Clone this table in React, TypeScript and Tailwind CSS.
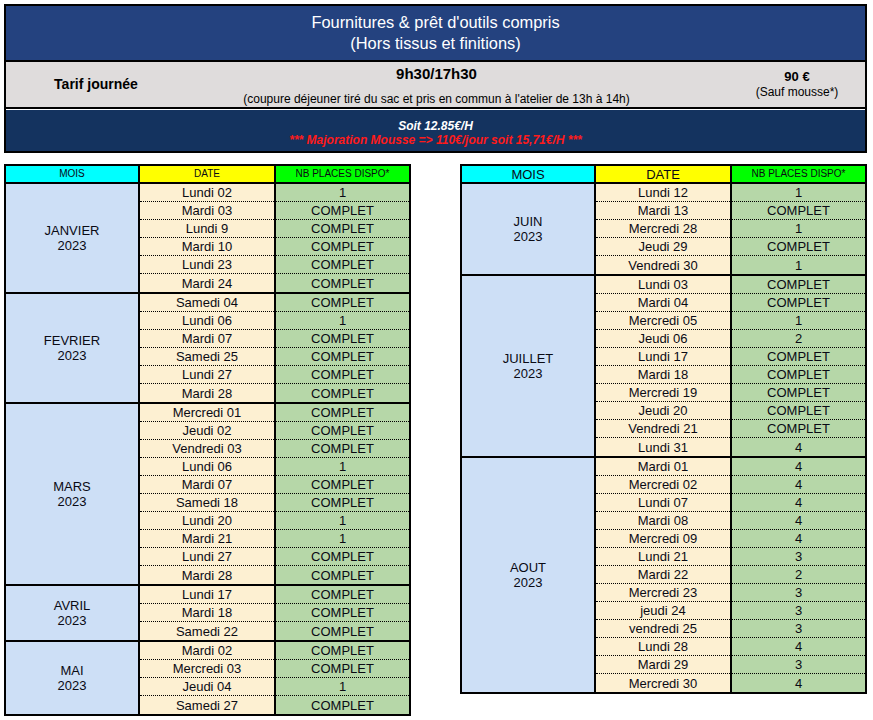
type Row = [string, string];
type Month = { name: string; rows: Row[] };

const leftMonths: Month[] = [
  {
    name: "JANVIER",
    rows: [
      ["Lundi 02", "1"],
      ["Mardi 03", "COMPLET"],
      ["Lundi 9", "COMPLET"],
      ["Mardi 10", "COMPLET"],
      ["Lundi 23", "COMPLET"],
      ["Mardi 24", "COMPLET"],
    ],
  },
  {
    name: "FEVRIER",
    rows: [
      ["Samedi 04", "COMPLET"],
      ["Lundi 06", "1"],
      ["Mardi 07", "COMPLET"],
      ["Samedi 25", "COMPLET"],
      ["Lundi 27", "COMPLET"],
      ["Mardi 28", "COMPLET"],
    ],
  },
  {
    name: "MARS",
    rows: [
      ["Mercredi 01", "COMPLET"],
      ["Jeudi 02", "COMPLET"],
      ["Vendredi 03", "COMPLET"],
      ["Lundi 06", "1"],
      ["Mardi 07", "COMPLET"],
      ["Samedi 18", "COMPLET"],
      ["Lundi 20", "1"],
      ["Mardi 21", "1"],
      ["Lundi 27", "COMPLET"],
      ["Mardi 28", "COMPLET"],
    ],
  },
  {
    name: "AVRIL",
    rows: [
      ["Lundi 17", "COMPLET"],
      ["Mardi 18", "COMPLET"],
      ["Samedi 22", "COMPLET"],
    ],
  },
  {
    name: "MAI",
    rows: [
      ["Mardi 02", "COMPLET"],
      ["Mercredi 03", "COMPLET"],
      ["Jeudi 04", "1"],
      ["Samedi 27", "COMPLET"],
    ],
  },
];

const rightMonths: Month[] = [
  {
    name: "JUIN",
    rows: [
      ["Lundi 12", "1"],
      ["Mardi 13", "COMPLET"],
      ["Mercredi 28", "1"],
      ["Jeudi 29", "COMPLET"],
      ["Vendredi 30", "1"],
    ],
  },
  {
    name: "JUILLET",
    rows: [
      ["Lundi 03", "COMPLET"],
      ["Mardi 04", "COMPLET"],
      ["Mercredi 05", "1"],
      ["Jeudi 06", "2"],
      ["Lundi 17", "COMPLET"],
      ["Mardi 18", "COMPLET"],
      ["Mercredi 19", "COMPLET"],
      ["Jeudi 20", "COMPLET"],
      ["Vendredi 21", "COMPLET"],
      ["Lundi 31", "4"],
    ],
  },
  {
    name: "AOUT",
    rows: [
      ["Mardi 01", "4"],
      ["Mercredi 02", "4"],
      ["Lundi 07", "4"],
      ["Mardi 08", "4"],
      ["Mercredi 09", "4"],
      ["Lundi 21", "3"],
      ["Mardi 22", "2"],
      ["Mercredi 23", "3"],
      ["jeudi 24", "3"],
      ["vendredi 25", "3"],
      ["Lundi 28", "4"],
      ["Mardi 29", "3"],
      ["Mercredi 30", "4"],
    ],
  },
];

function PlanningTable({ months, bigHeader }: { months: Month[]; bigHeader: boolean }) {
  const headText = bigHeader ? "text-[13px]" : "text-[10px]";

  return (
    <div className="w-[407px] border-2 border-black text-[13px] leading-none text-[#0a0a14]">
      <div className="flex h-[18px] border-b-2 border-black">
        <div className={`flex w-[134px] items-center justify-center border-r-2 border-black bg-[#00ffff] ${headText}`}>
          MOIS
        </div>
        <div className={`flex w-[136px] items-center justify-center border-r-2 border-black bg-[#ffff00] ${headText}`}>
          DATE
        </div>
        <div className="flex flex-1 items-center justify-center bg-[#00ff00] text-[10px]">
          NB PLACES DISPO*
        </div>
      </div>

      {months.map((month, index) => (
        <div className={`flex ${index > 0 ? "border-t-2 border-black" : ""}`} key={month.name}>
          <div className="flex w-[134px] flex-col items-center justify-center border-r-2 border-black bg-[#cddff6] leading-[15px]">
            <span>{month.name}</span>
            <span>2023</span>
          </div>
          <div className="w-[136px] divide-y divide-dotted divide-black border-r-2 border-black bg-[#fdf0d2]">
            {month.rows.map(([date], i) => (
              <div className="flex h-[18px] items-center justify-center" key={i}>
                {date}
              </div>
            ))}
          </div>
          <div className="flex-1 divide-y divide-dotted divide-black bg-[#b6d7a8]">
            {month.rows.map(([, places], i) => (
              <div className="flex h-[18px] items-center justify-center" key={i}>
                {places}
              </div>
            ))}
          </div>
        </div>
      ))}
    </div>
  );
}

export default function App() {
  return (
    <div className="min-h-[720px] w-[873px] bg-white px-[4px] pt-[4px] font-['Liberation_Sans',Arial,sans-serif]">
      <div className="w-[863px] border-2 border-black">
        <div className="flex h-[54px] flex-col items-center justify-center bg-[#24427f] text-[16.4px] leading-[21px] text-white">
          <span>Fournitures &amp; prêt d'outils compris</span>
          <span>(Hors tissus et finitions)</span>
        </div>

        <div className="flex h-[49px] border-y-2 border-black bg-[#dfdcdc] text-black">
          <div className="flex w-[180px] items-center justify-center text-[14px] font-bold">Tarif journée</div>
          <div className="flex flex-1 flex-col items-center justify-between pb-[1px] pr-[42px] pt-[3px]">
            <span className="text-[15px] font-bold leading-[18px]">9h30/17h30</span>
            <span className="text-[12px] leading-[14px]">
              (coupure déjeuner tiré du sac et pris en commun à l'atelier de 13h à 14h)
            </span>
          </div>
          <div className="flex w-[136px] flex-col items-center justify-center">
            <span className="text-[13px] font-bold leading-[16px]">90 €</span>
            <span className="text-[12px] leading-[15px]">(Sauf mousse*)</span>
          </div>
        </div>

        <div className="border-t border-white">
          <div className="flex h-[41px] flex-col items-center justify-center bg-[#14335f] pt-[4px] text-[12px] font-bold italic leading-[14px]">
            <span className="text-white">Soit 12.85€/H</span>
            <span className="text-[#ff1a1a]">*** Majoration Mousse =&gt; 110€/jour soit 15,71€/H ***</span>
          </div>
        </div>
      </div>

      <div className="mt-[11px] flex items-start gap-[49px]">
        <PlanningTable months={leftMonths} bigHeader={false} />
        <PlanningTable months={rightMonths} bigHeader />
      </div>
    </div>
  );
}
